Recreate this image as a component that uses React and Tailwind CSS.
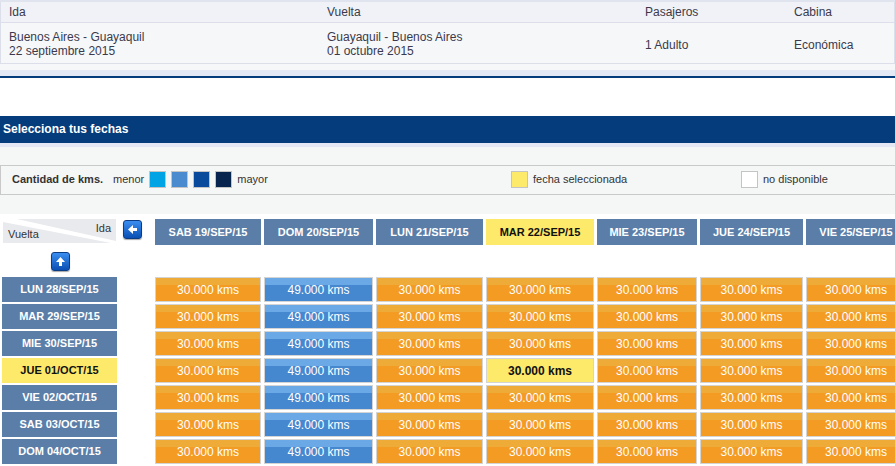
import React from "react";

const cols = [
  { label: "SAB 19/SEP/15", w: "w-[106px]" },
  { label: "DOM 20/SEP/15", w: "w-[109px]" },
  { label: "LUN 21/SEP/15", w: "w-[107px]" },
  { label: "MAR 22/SEP/15", w: "w-[108px]", selected: true },
  { label: "MIE 23/SEP/15", w: "w-[100px]" },
  { label: "JUE 24/SEP/15", w: "w-[103px]" },
  { label: "VIE 25/SEP/15", w: "w-[100px]" },
];

const rows = [
  { label: "LUN 28/SEP/15" },
  { label: "MAR 29/SEP/15" },
  { label: "MIE 30/SEP/15" },
  { label: "JUE 01/OCT/15", selected: true },
  { label: "VIE 02/OCT/15" },
  { label: "SAB 03/OCT/15" },
  { label: "DOM 04/OCT/15" },
];

const ArrowButton = ({ up }) => (
  <div className="w-[19px] h-[19px] rounded-[3px] border border-[#0b3d84] bg-[linear-gradient(#3a8ef0,#0a4fb4)] shadow-[0_1px_1px_rgba(0,0,0,0.35)] flex items-center justify-center">
    <svg width="13" height="13" viewBox="0 0 13 13" className={up ? "rotate-90" : ""}>
      <polygon points="2,6.5 7,2 7,5 11,5 11,8 7,8 7,11" fill="#fff" />
    </svg>
  </div>
);

const Cell = ({ w, kind }) => {
  if (kind === "selected") {
    return (
      <div className={`${w} h-[25px] shrink-0 border border-[#d4d4d4] bg-[#fde96a] flex items-center justify-center text-[12px] font-bold text-[#111]`}>
        30.000 kms
      </div>
    );
  }
  if (kind === "blue") {
    return (
      <div className={`${w} h-[25px] shrink-0 border border-[#d4d4d4] bg-[linear-gradient(#6aa9e6_0,#6aa9e6_7px,#4688cf_7px)] flex items-center justify-center text-[12px] text-white`}>
        49.000 kms
      </div>
    );
  }
  return (
    <div className={`${w} h-[25px] shrink-0 border border-[#d4d4d4] bg-[linear-gradient(#efab37_0,#efab37_7px,#f49b24_7px)] flex items-center justify-center text-[12px] text-white`}>
      30.000 kms
    </div>
  );
};

export default function App() {
  return (
    <div className="w-[895px] h-[466px] overflow-hidden bg-white font-['Liberation_Sans',Arial,sans-serif] text-[#333]">
      {/* SUMMARY */}
      <div className="h-[2px] bg-[#dfe4ef]" />
      <div className="flex h-[21px] items-center bg-[#f1f2f7] border-b border-x border-[#dcdfe9] text-[12px] text-[#3a3a4c] pl-[8px]">
        <div className="w-[318px]">Ida</div>
        <div className="w-[318px]">Vuelta</div>
        <div className="w-[149px]">Pasajeros</div>
        <div>Cabina</div>
      </div>
      <div className="flex h-[41px] items-center bg-[#f6f7f9] border-b border-x border-[#dcdfe9] text-[12px] leading-[14px] text-[#3a3a4c] pl-[8px]">
        <div className="w-[318px] pt-[1px]">
          <div>Buenos Aires - Guayaquil</div>
          <div>22 septiembre 2015</div>
        </div>
        <div className="w-[318px] pt-[1px]">
          <div>Guayaquil - Buenos Aires</div>
          <div>01 octubre 2015</div>
        </div>
        <div className="w-[149px] pt-[3px]">1 Adulto</div>
        <div className="pt-[3px]">Económica</div>
      </div>
      <div className="h-[6px] bg-[#f5f7f8]" />
      <div className="h-[6px] bg-[#e4eaf5]" />
      <div className="h-[2px] bg-[#043b7b]" />

      {/* TITLE BAR */}
      <div className="mt-[38px] h-[27px] bg-[#043c7c] flex items-center pl-[3px] pb-[1px] text-[12px] font-bold text-white">
        Selecciona tus fechas
      </div>
      <div className="h-[4px] bg-[#e4e8f4]" />

      {/* LEGEND */}
      <div className="bg-[#f5f6f6] pt-[18px] pb-[19px]">
        <div className="h-[30px] border-y border-l border-[#c9c9c9] flex items-center pb-[2px] text-[11px] text-[#333]">
          <div className="w-[510px] flex items-center pl-[11px]">
            <span className="font-bold">Cantidad de kms.</span>
            <span className="ml-[10px]">menor</span>
            <span className="ml-[5px] w-[17px] h-[17px] border border-[#c4c4c4] bg-[#00a3e4]" />
            <span className="ml-[5px] w-[17px] h-[17px] border border-[#c4c4c4] bg-[#4a8bd0]" />
            <span className="ml-[5px] w-[17px] h-[17px] border border-[#c4c4c4] bg-[#0a4a9c]" />
            <span className="ml-[5px] w-[17px] h-[17px] border border-[#c4c4c4] bg-[#07244f]" />
            <span className="ml-[5px]">mayor</span>
          </div>
          <div className="w-[230px] flex items-center">
            <span className="w-[17px] h-[17px] border border-[#c4c4c4] bg-[#fde96a]" />
            <span className="ml-[5px]">fecha seleccionada</span>
          </div>
          <div className="flex items-center">
            <span className="w-[17px] h-[17px] border border-[#c4c4c4] bg-white" />
            <span className="ml-[5px]">no disponible</span>
          </div>
        </div>
      </div>

      {/* GRID */}
      <div className="mt-[5px] flex gap-[3px]">
        <div className="w-[152px] shrink-0 flex items-start">
          <div className="relative ml-[3px] w-[113px] h-[24px] bg-[#e9eaed] text-[11px] text-[#333] overflow-hidden">
            <svg className="absolute inset-0" width="113" height="24" viewBox="0 0 113 24">
              <polygon points="0,0 14,0 113,22 113,25 0,3" fill="#fff" />
            </svg>
            <span className="absolute right-[5px] top-[1px]">Ida</span>
            <span className="absolute left-[5px] bottom-[1px]">Vuelta</span>
          </div>
          <div className="ml-[7px] mt-[1px]">
            <ArrowButton />
          </div>
        </div>
        {cols.map((c) => (
          <div
            key={c.label}
            className={`${c.w} h-[26px] shrink-0 flex items-center justify-center text-[11px] font-bold ${
              c.selected ? "bg-[#fde96a] text-[#111]" : "bg-[#5a7ea8] text-white"
            }`}
          >
            {c.label}
          </div>
        ))}
      </div>

      <div className="mt-[7px] ml-[51px] h-[19px]">
        <ArrowButton up />
      </div>

      <div className="mt-[6px] flex flex-col gap-[2px]">
        {rows.map((r) => (
          <div key={r.label} className="flex gap-[3px]">
            <div className="w-[152px] shrink-0 pl-[2px]">
              <div
                className={`w-[115px] h-[25px] flex items-center justify-center text-[11px] font-bold ${
                  r.selected ? "bg-[#fde96a] text-[#111]" : "bg-[#5a7ea8] text-white"
                }`}
              >
                {r.label}
              </div>
            </div>
            {cols.map((c, ci) => (
              <Cell
                key={c.label}
                w={c.w}
                kind={r.selected && c.selected ? "selected" : ci === 1 ? "blue" : "orange"}
              />
            ))}
          </div>
        ))}
      </div>
    </div>
  );
}
